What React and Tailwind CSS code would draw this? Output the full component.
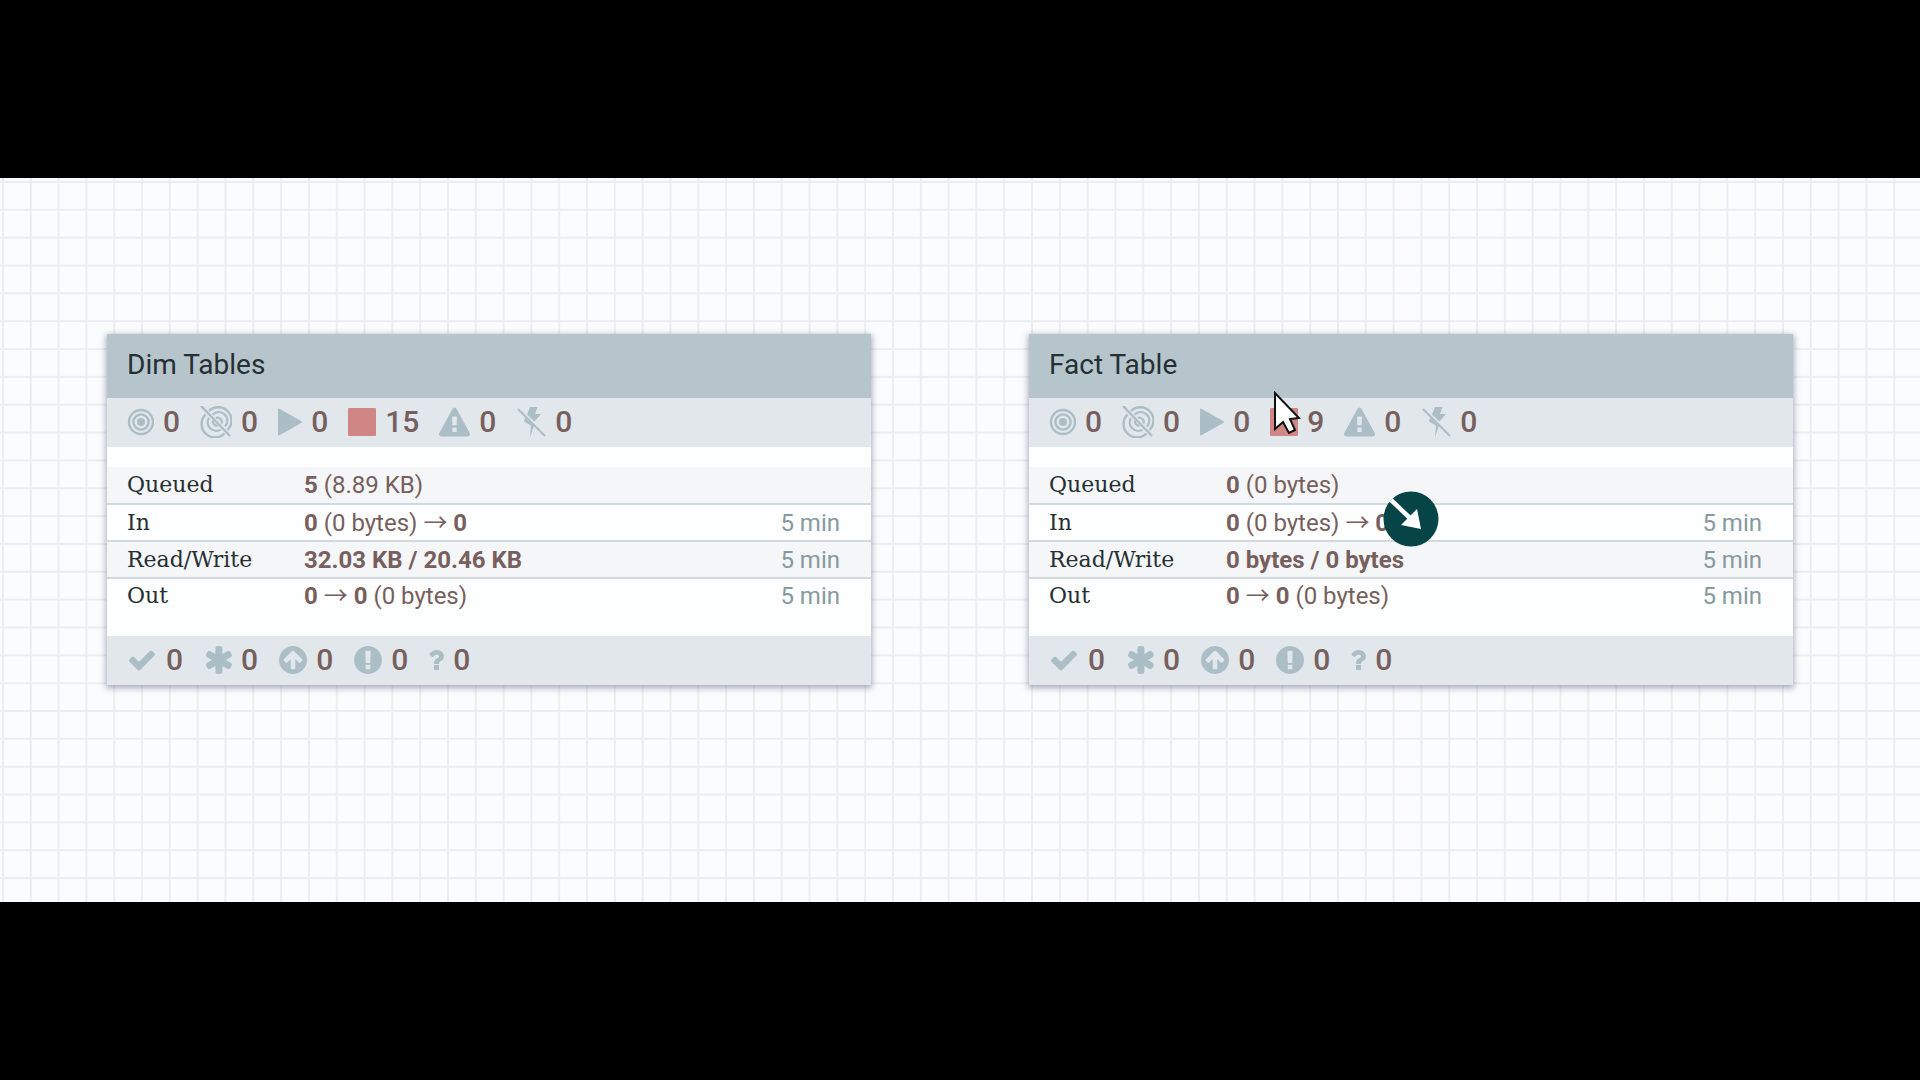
function Transmitting() {
  return (
    <svg viewBox="0 0 27 28" className="w-[27px] h-7" fill="none" stroke="currentColor">
      <circle cx="14" cy="14" r="12" strokeWidth="2.4" />
      <circle cx="14" cy="14" r="7.6" strokeWidth="2.4" />
      <circle cx="14" cy="14" r="4" fill="currentColor" stroke="none" />
    </svg>
  );
}

function NotTransmitting() {
  return (
    <svg viewBox="0 0 32 32" className="w-8 h-8" fill="none" stroke="currentColor">
      <path d="M9 5A13 13 0 1 1 27.500 24M5.500 8.500A13 13 0 0 0 24.500 27.500" strokeWidth="2.4" />
      <path d="M12.500 8.700A8.400 8.400 0 0 1 25 20.500M9 12A8.400 8.400 0 0 0 20.500 23.600" strokeWidth="2.2" />
      <path d="M16 12A4.300 4.300 0 0 1 21.500 17.500M13 14.500A4.300 4.300 0 0 0 17.500 19.800" strokeWidth="2.2" />
      <path d="M1 0 30 30" strokeWidth="2.4" />
    </svg>
  );
}

function Running() {
  return (
    <svg viewBox="0 0 24 28" className="w-6 h-7" fill="currentColor">
      <path d="M0 1.500Q0 0 1.500 .8L23.500 13.200Q24.500 14 23.500 14.800L1.500 27.200Q0 28 0 26.500Z" />
    </svg>
  );
}

function Stopped() {
  return (
    <svg viewBox="0 0 28 28" className="w-7 h-7">
      <rect width="28" height="28" rx="1" fill="#d18686" />
    </svg>
  );
}

function Invalid() {
  return (
    <svg viewBox="0 0 1792 1664" className="w-[31px] h-[30px]" fill="currentColor">
      <path d="M1024 1375v-190q0-14-9.500-23.500t-22.500-9.500h-192q-13 0-22.500 9.500t-9.500 23.500v190q0 14 9.500 23.500t22.500 9.500h192q13 0 22.500-9.500t9.500-23.500zm-2-374l18-459q0-12-10-19-13-11-24-11h-220q-11 0-24 11-10 7-10 21l17 457q0 10 10 16.500t24 6.500h185q14 0 23.500-6.500t10.500-16.500zm-14-934l768 1408q35 63-2 126-17 29-46.500 46t-63.500 17h-1536q-34 0-63.500-17t-46.500-46q-37-63-2-126l768-1408q17-31 47-49t65-18 65 18 47 49z" />
    </svg>
  );
}

function Disabled() {
  return (
    <svg viewBox="0 0 30 32" className="w-[30px] h-8" fill="currentColor">
      <path d="M14 1H21.500L19 8H25L18.500 15.500 11 8.500Z" />
      <path d="M9 12 18 19.500 14 31.500 15 19.500 8 15.500Z" />
      <path d="M2 3 29 30" stroke="currentColor" strokeWidth="2" />
    </svg>
  );
}

function UpToDate() {
  return (
    <svg viewBox="0 0 1792 1792" className="size-[30px]" fill="currentColor">
      <path d="M1671 566q0 40-28 68l-724 724-136 136q-28 28-68 28t-68-28l-136-136-362-362q-28-28-28-68t28-68l136-136q28-28 68-28t68 28l294 295 656-657q28-28 68-28t68 28l136 136q28 28 28 68z" />
    </svg>
  );
}

function LocallyModified() {
  return (
    <svg viewBox="20 128 1600 1536" className="w-[29px] h-7" fill="currentColor">
      <path d="M1546 1050q46 26 59.500 77.500t-12.500 97.500l-64 110q-26 46-77.500 59.500t-97.500-12.500l-266-153v307q0 52-38 90t-90 38h-128q-52 0-90-38t-38-90v-307l-266 153q-46 26-97.500 12.500t-77.500-59.500l-64-110q-26-46-12.500-97.500t59.500-77.500l266-154-266-154q-46-26-59.500-77.500t12.500-97.500l64-110q26-46 77.500-59.500t97.500 12.500l266 153v-307q0-52 38-90t90-38h128q52 0 90 38t38 90v307l266-153q46-26 97.500-12.500t77.500 59.500l64 110q26 46 12.500 97.500t-59.500 77.500l-266 154z" />
    </svg>
  );
}

function Stale() {
  return (
    <svg viewBox="73 128 1591 1536" className="w-[29px] h-7" fill="currentColor">
      <path d="M1412 896q0-27-18-45l-362-362-91-91q-18-18-45-18t-45 18l-91 91-362 362q-18 18-18 45t18 45l91 91q18 18 45 18t45-18l189-189v502q0 26 19 45t45 19h128q26 0 45-19t19-45v-502l189 189q19 19 45 19t45-19l91-91q18-18 18-45zm252 0q0 209-103 385.500t-279.500 279.500-385.500 103-385.500-103-279.500-279.500-103-385.500 103-385.500 279.500-279.500 385.500-103 385.500 103 279.500 279.500 103 385.500z" />
    </svg>
  );
}

function ModifiedAndStale() {
  return (
    <svg viewBox="73 128 1591 1536" className="w-[29px] h-7" fill="currentColor">
      <path d="M896 128q209 0 385.500 103t279.500 279.500 103 385.500-103 385.500-279.500 279.500-385.500 103-385.500-103-279.500-279.500-103-385.500 103-385.500 279.500-279.500 385.500-103zm128 1247v-190q0-14-9-23.500t-22-9.500h-192q-13 0-23 10t-10 23v190q0 13 10 23t23 10h192q13 0 22-9.500t9-23.500zm-2-344l18-621q0-12-10-18-10-8-24-8h-220q-14 0-24 8-10 6-10 18l17 621q0 10 10 17.500t24 7.500h185q14 0 23.500-7.500t10.500-17.500z" />
    </svg>
  );
}

function SyncFailure() {
  return (
    <svg viewBox="388 256 1016 1280" className="w-4 h-6" fill="currentColor">
      <path d="M1088 1256v240q0 16-12 28t-28 12h-240q-16 0-28-12t-12-28v-240q0-16 12-28t28-12h240q16 0 28 12t12 28zm316-600q0 54-15.500 101t-35 76.500-55 59.500-57.500 43.500-61 35.500q-41 23-68.500 65t-27.500 67q0 17-12 32.500t-28 15.500h-240q-15 0-25.500-18.500t-10.500-37.500v-45q0-83 65-156.500t143-108.500q59-27 84-56t25-76q0-42-46.500-74t-107.500-32q-65 0-108 29-35 25-107 115-13 16-31 16-12 0-25-8l-164-125q-13-10-15.500-25t5.500-28q160-266 464-266 80 0 161 31t146 83 106 127.500 41 158.500z" />
    </svg>
  );
}

function Count({ icon, label, children }) {
  return (
    <div className="flex items-center gap-[9px] text-[#abbdc5]" title={label}>
      {icon}
      <span className="text-[#775f5e] font-medium">{children}</span>
    </div>
  );
}

function Arrow() {
  return <span className="font-['Noto_Sans_CJK_JP',sans-serif] leading-none">→</span>;
}

function Row({ label, shaded, last, time, children }) {
  return (
    <tr className={`${shaded ? "bg-[#f4f6f7]" : ""} ${last ? "h-[34px]" : "h-[37px] border-b-2 border-[#d2d9dd]"}`}>
      <th scope="row" className="w-[197px] pl-5 text-left font-normal text-[22px] text-[#262f33] font-['DejaVu_Serif',serif]">{label}</th>
      <td className="text-[#775f5e]">{children}</td>
      <td className="pr-[31px] text-right text-[#87999f]">{time}</td>
    </tr>
  );
}

function ProcessGroup({ name, stopped, queued, readWrite, children }) {
  return (
    <section className="relative flex-1 bg-[#fdfefe] shadow-[0_2px_6px_1px_rgba(90,90,130,0.5)]">
      <h2 className="h-16 px-5 pb-0.5 flex items-center text-[28px] leading-8 text-[#262f33] bg-[#b5c5cb]">{name}</h2>
      <div className="h-[49px] px-5 pb-0.5 flex items-center gap-5 text-[30px] leading-8 bg-[#e1e7ea]">
        <Count label="Transmitting" icon={<Transmitting />}>0</Count>
        <Count label="Not transmitting" icon={<NotTransmitting />}>0</Count>
        <Count label="Running" icon={<Running />}>0</Count>
        <Count label="Stopped" icon={<Stopped />}>{stopped}</Count>
        <Count label="Invalid" icon={<Invalid />}>0</Count>
        <Count label="Disabled" icon={<Disabled />}>0</Count>
      </div>
      <table className="mt-5 mb-6 w-full text-[24px] leading-7 border-collapse">
        <tbody>
          <Row label="Queued" shaded>{queued}</Row>
          <Row label="In" time="5 min"><b>0</b> (0 bytes) <Arrow /> <b>0</b></Row>
          <Row label="Read/Write" shaded time="5 min"><b>{readWrite}</b></Row>
          <Row label="Out" last time="5 min"><b>0</b> <Arrow /> <b>0</b> (0 bytes)</Row>
        </tbody>
      </table>
      <div className="h-[49px] px-5 pb-0.5 flex items-center gap-5 text-[30px] leading-8 bg-[#e1e7ea]">
        <Count label="Up to date" icon={<UpToDate />}>0</Count>
        <Count label="Locally modified" icon={<LocallyModified />}>0</Count>
        <Count label="Stale" icon={<Stale />}>0</Count>
        <Count label="Locally modified and stale" icon={<ModifiedAndStale />}>0</Count>
        <Count label="Sync failure" icon={<SyncFailure />}>0</Count>
      </div>
      {children}
    </section>
  );
}

export default function App() {
  return (
    <div className="min-h-screen flex flex-col justify-center bg-black font-[Roboto,sans-serif]">
      <main className="flex gap-[158px] pl-[107px] pr-[127px] pt-[156px] pb-[217px] bg-[#fbfcfd] bg-[linear-gradient(to_right,transparent_2px,#eaeef2_2px,#eaeef2_4px,transparent_4px),linear-gradient(to_bottom,transparent_3px,#eaeef2_3px,#eaeef2_5px,transparent_5px)] bg-size-[calc(100%/69)_calc(100%/26)]">
        <ProcessGroup name="Dim Tables" stopped="15" queued={<><b>5</b> (8.89 KB)</>} readWrite="32.03 KB / 20.46 KB" />
        <ProcessGroup name="Fact Table" stopped="9" queued={<><b>0</b> (0 bytes)</>} readWrite="0 bytes / 0 bytes">
          <svg viewBox="0 0 56 56" className="absolute left-[354px] top-[157px] size-14">
            <circle cx="28" cy="28" r="27.5" fill="#064448" />
            <path d="M8 9 28 28" stroke="#fff" strokeWidth="4.5" />
            <path d="M38 38 18 34 34 18Z" fill="#fff" />
          </svg>
          <svg viewBox="0 0 28 44" className="absolute left-[244px] top-[57px] w-7 h-11">
            <path d="M2 2V38L10 31 16 42 22 39 17 28 26 27Z" fill="#fff" stroke="#111" strokeWidth="2" />
          </svg>
        </ProcessGroup>
      </main>
    </div>
  );
}
